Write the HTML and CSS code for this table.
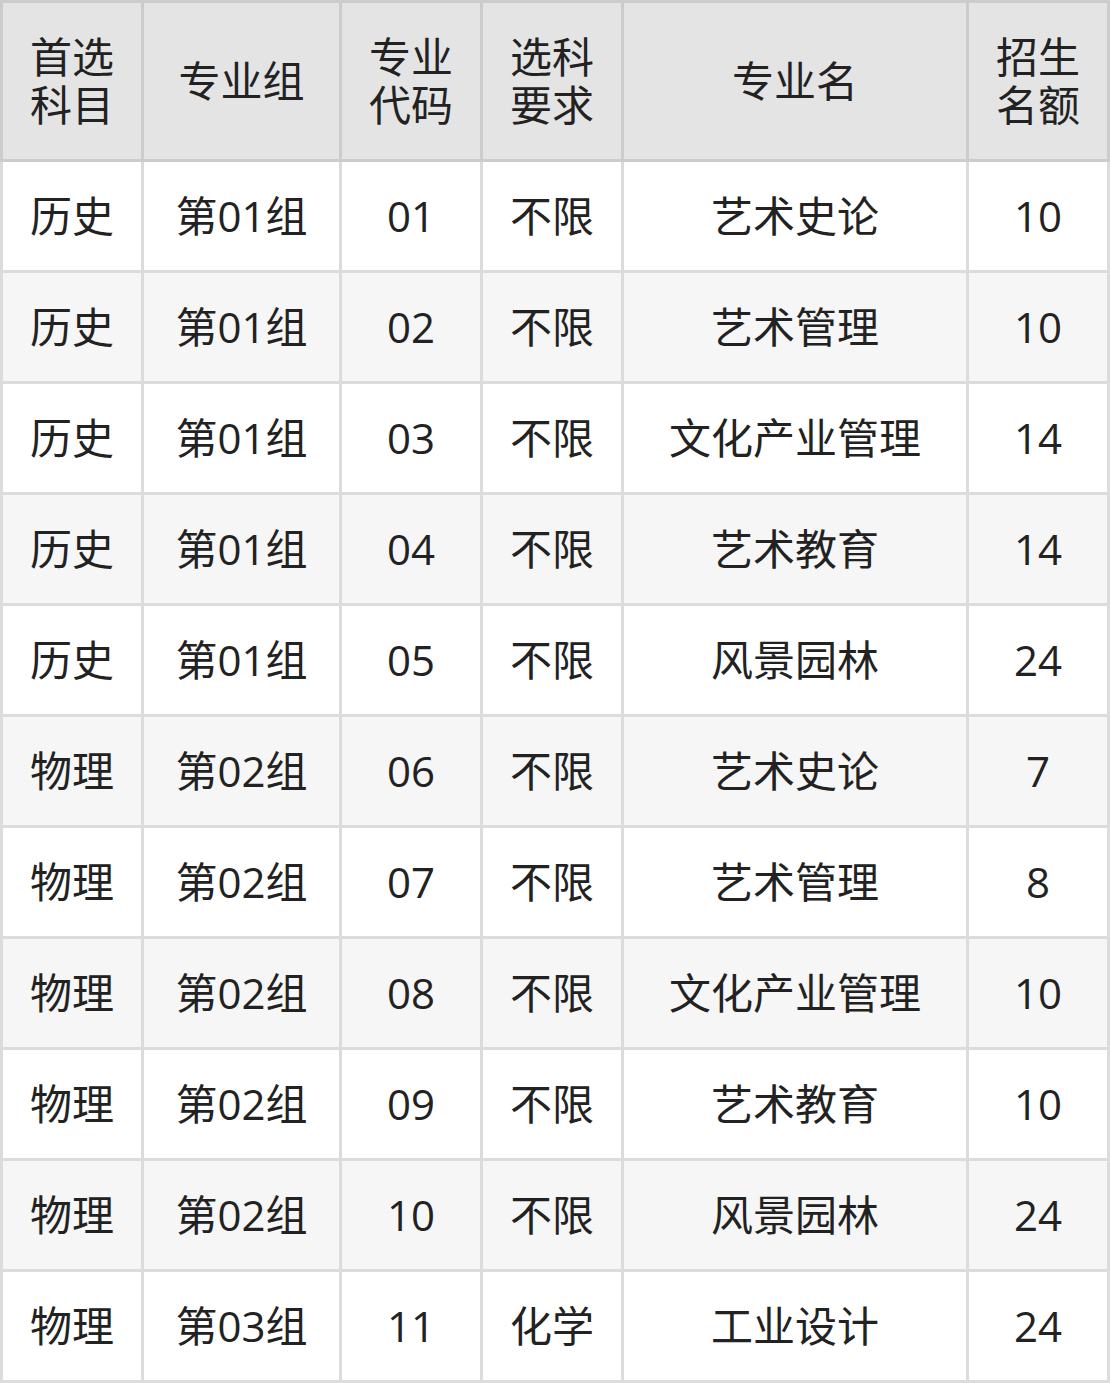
FILE: index.html
```html
<!DOCTYPE html>
<html lang="zh">
<head>
<meta charset="utf-8">
<title>专业招生计划</title>
<link rel="stylesheet" href="styles.css">
</head>
<body>
<table class="plan">
  <thead>
    <tr>
      <th class="c1">首选<br>科目</th>
      <th class="c2">专业组</th>
      <th class="c3">专业<br>代码</th>
      <th class="c4">选科<br>要求</th>
      <th class="c5">专业名</th>
      <th class="c6">招生<br>名额</th>
    </tr>
  </thead>
  <tbody>
    <tr><td class="c1">历史</td><td>第01组</td><td>01</td><td>不限</td><td>艺术史论</td><td>10</td></tr>
    <tr><td class="c1">历史</td><td>第01组</td><td>02</td><td>不限</td><td>艺术管理</td><td>10</td></tr>
    <tr><td class="c1">历史</td><td>第01组</td><td>03</td><td>不限</td><td>文化产业管理</td><td>14</td></tr>
    <tr><td class="c1">历史</td><td>第01组</td><td>04</td><td>不限</td><td>艺术教育</td><td>14</td></tr>
    <tr><td class="c1">历史</td><td>第01组</td><td>05</td><td>不限</td><td>风景园林</td><td>24</td></tr>
    <tr><td class="c1">物理</td><td>第02组</td><td>06</td><td>不限</td><td>艺术史论</td><td>7</td></tr>
    <tr><td class="c1">物理</td><td>第02组</td><td>07</td><td>不限</td><td>艺术管理</td><td>8</td></tr>
    <tr><td class="c1">物理</td><td>第02组</td><td>08</td><td>不限</td><td>文化产业管理</td><td>10</td></tr>
    <tr><td class="c1">物理</td><td>第02组</td><td>09</td><td>不限</td><td>艺术教育</td><td>10</td></tr>
    <tr><td class="c1">物理</td><td>第02组</td><td>10</td><td>不限</td><td>风景园林</td><td>24</td></tr>
    <tr><td class="c1">物理</td><td>第03组</td><td>11</td><td>化学</td><td>工业设计</td><td>24</td></tr>
  </tbody>
</table>
</body>
</html>
```

FILE: styles.css
```css
html, body {
  margin: 0;
  padding: 0;
  background: #ffffff;
}

.plan {
  border-collapse: separate;
  border-spacing: 0;
  table-layout: fixed;
  width: 1110px;
  font-family: "Open Sans", "Noto Sans CJK SC", sans-serif;
  font-size: 42px;
  color: #222222;
}

.plan th,
.plan td {
  box-sizing: border-box;
  padding: 0;
  text-align: center;
  vertical-align: middle;
  font-weight: normal;
}

.plan th {
  height: 162px;
  background: #e4e4e4;
  border-top: 3px solid #cccccc;
  border-right: 3px solid #cccccc;
  border-bottom: 3px solid #cccccc;
  line-height: 48px;
}

.plan th.c1 {
  border-left: 3px solid #cccccc;
}

.plan td {
  height: 111px;
  border-right: 3px solid #dcdcdc;
  border-bottom: 3px solid #dcdcdc;
  line-height: 48px;
}

.plan td.c1 {
  border-left: 3px solid #dcdcdc;
}

.plan tbody tr:nth-child(even) td {
  background: #f6f6f6;
}

.c1 { width: 144px; }
.c2 { width: 198px; }
.c3 { width: 141px; }
.c4 { width: 141px; }
.c5 { width: 345px; }
.c6 { width: 141px; }
```
